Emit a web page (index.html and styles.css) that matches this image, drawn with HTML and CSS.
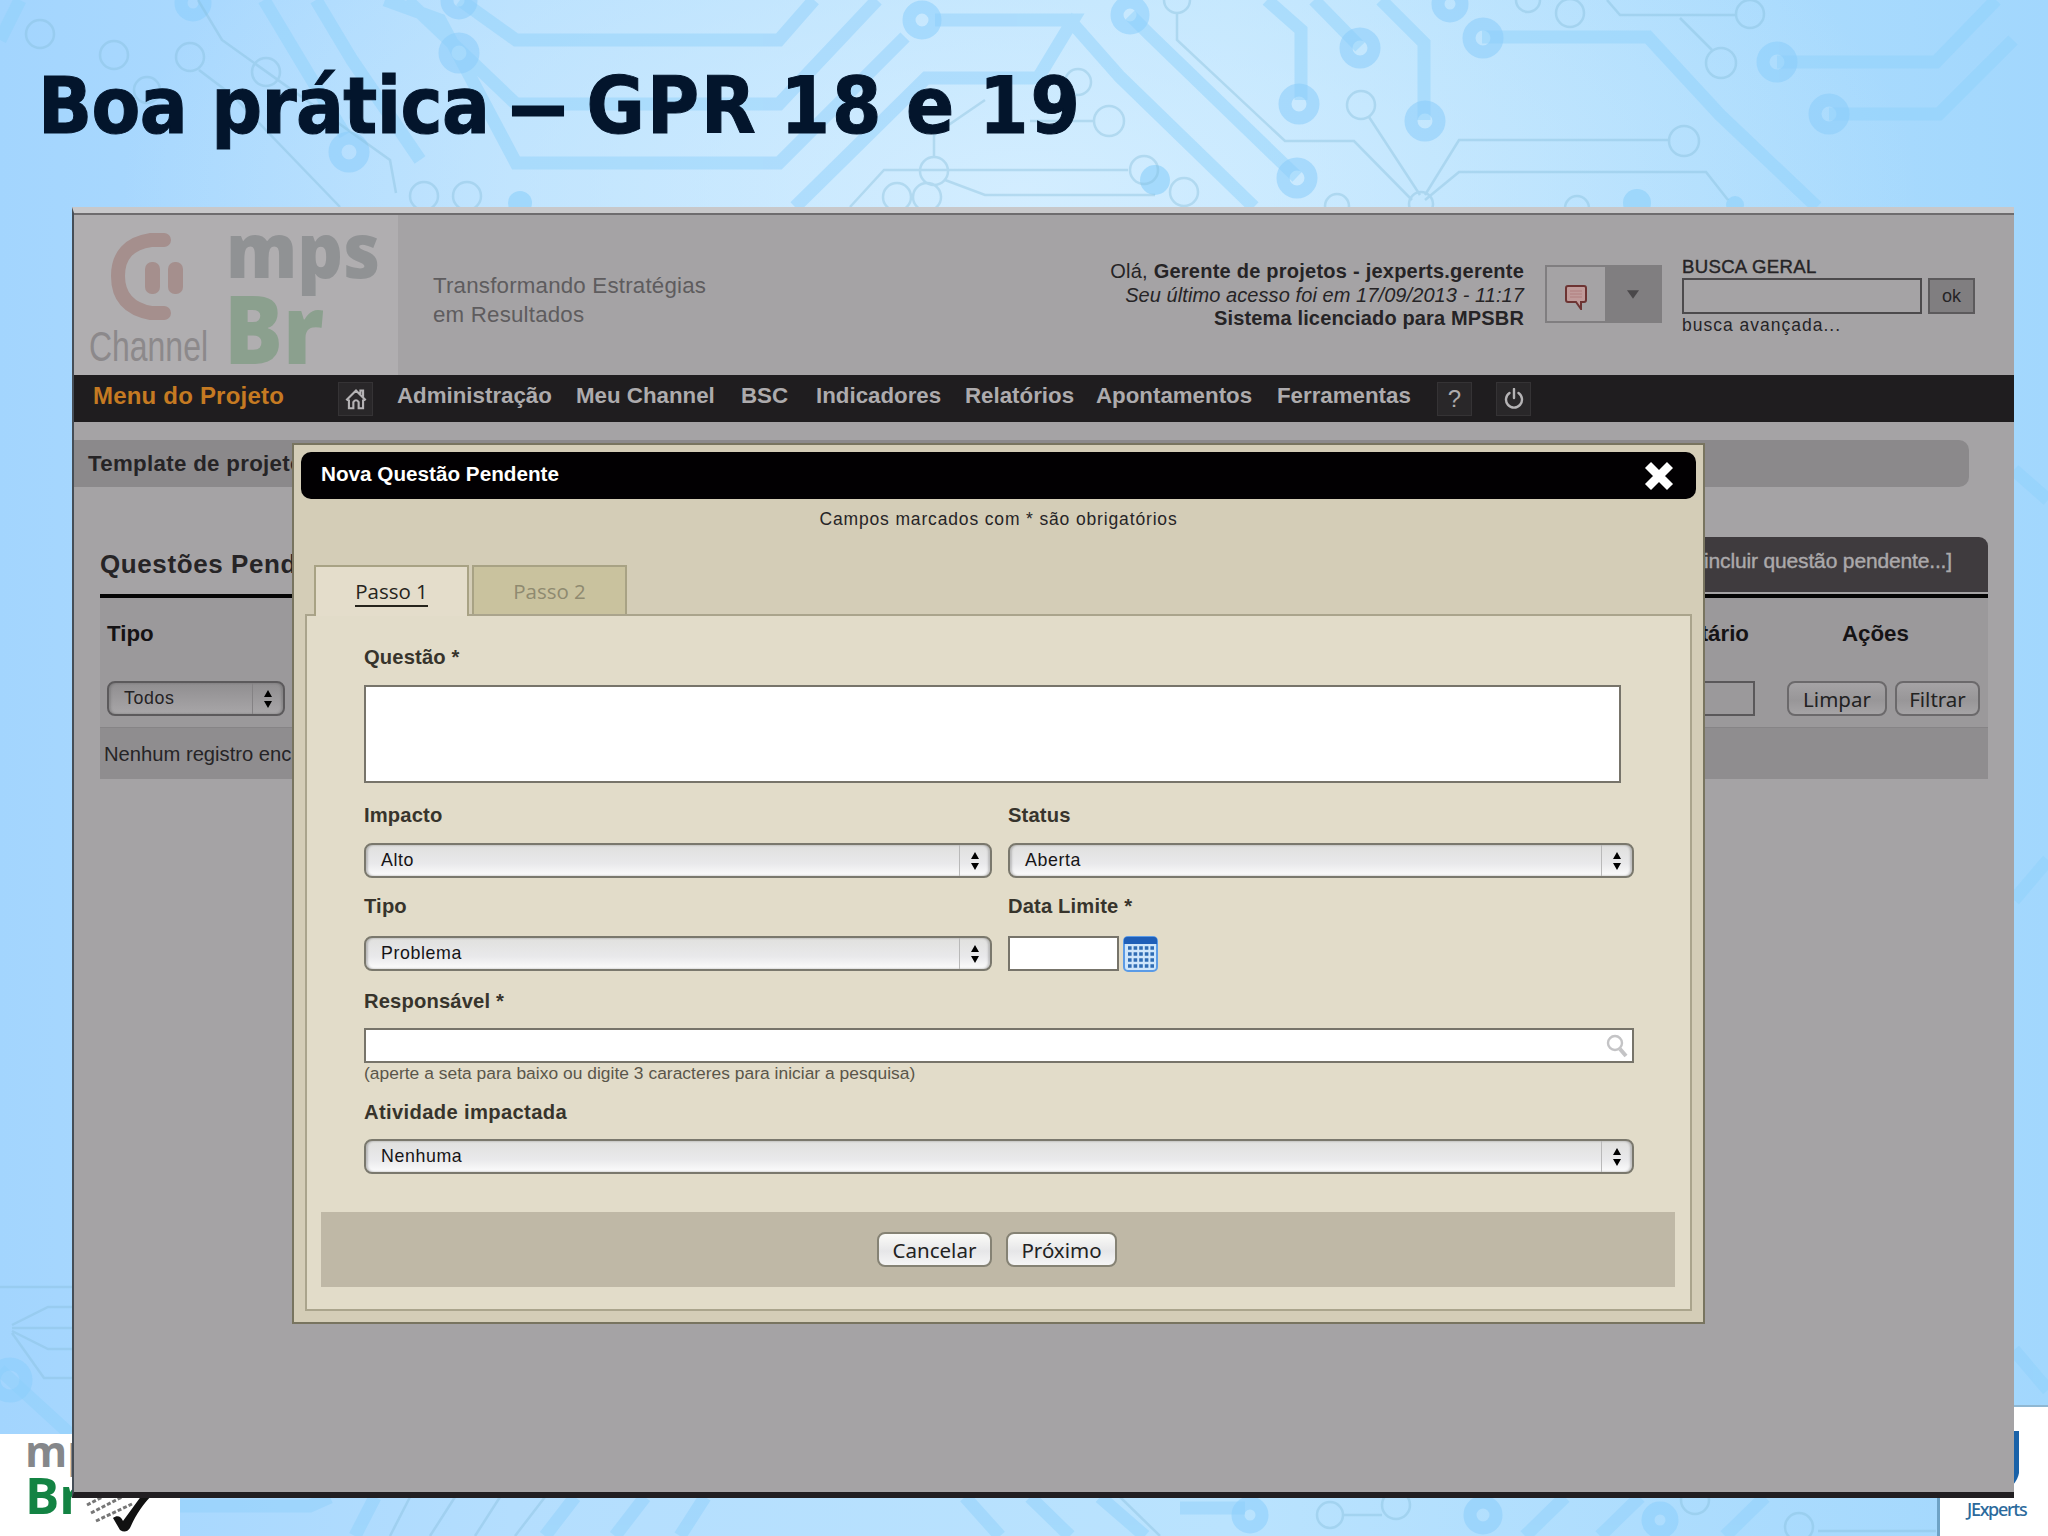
FILE: index.html
```html
<!DOCTYPE html>
<html lang="pt-BR">
<head>
    <meta charset="UTF-8">
    <meta name="viewport" content="width=device-width, initial-scale=1.0">
    <title>Boa prática – GPR 18 e 19</title>
    <link rel="stylesheet" href="styles.css">
</head>
<body>
    <div class="slide">
        <!-- circuitos do fundo -->
        <svg class="circuit" viewBox="0 0 2048 1536" fill="none">
            <g class="trace">
                <path d="M20 0L0 40M264 0L345 135M316 0L352 60L420 160M407 0L516 104H779L877 0M460 0L516 40H779L814 0M385 0L440 20L516 163H779L905 37"/>
                <path d="M795 207L926 78H1038L1073 20H935M1067 17L1120 77L1254 207M1130 15L1150 35L1297 177M1267 0L1301 30V100M1314 0L1360 47M1381 0L1424 43V120M1482 37H1648L1720 115L1817 207M1777 62H1936L1996 0M1829 114H1939L2013 40"/>
                <path d="M2014 470L2048 500M2014 1350L2048 1390M0 1370L70 1434M2014 900L2048 860"/>
                <path d="M180 1506H310L330 1497M375 1497L355 1536M575 1497L545 1536M645 1497L615 1536M705 1497L680 1536M965 1497L1000 1536M1030 1497L1070 1536M1100 1497L1145 1536M1180 1508H1245M1565 1497L1525 1536M1640 1497L1600 1536M1765 1497L1725 1536"/>
            </g>
            <g class="ring">
                <circle cx="349" cy="152" r="14"/><circle cx="459" cy="53" r="14"/><circle cx="193" cy="3" r="12"/><circle cx="459" cy="1" r="12"/>
                <circle cx="922" cy="20" r="13"/><circle cx="1130" cy="15" r="13"/><circle cx="1297" cy="178" r="14"/><circle cx="1299" cy="104" r="14"/>
                <circle cx="1360" cy="48" r="14"/><circle cx="1425" cy="121" r="14"/><circle cx="1450" cy="4" r="12"/><circle cx="1483" cy="38" r="14"/>
                <circle cx="1777" cy="62" r="14"/><circle cx="1829" cy="114" r="14"/><circle cx="10" cy="1380" r="16"/>
                <circle cx="1250" cy="1515" r="12"/><circle cx="1483" cy="1515" r="13"/><circle cx="1660" cy="1520" r="12"/>
            </g>
            <g class="blob">
                <circle cx="520" cy="203" r="12"/><circle cx="1155" cy="180" r="15"/><circle cx="1637" cy="203" r="14"/><circle cx="1735" cy="205" r="9"/>
            </g>
            <g class="wire">
                <circle cx="40" cy="34" r="14"/><circle cx="114" cy="55" r="14"/><circle cx="190" cy="57" r="14"/><circle cx="266" cy="72" r="14"/><circle cx="147" cy="90" r="13"/>
                <circle cx="424" cy="196" r="14"/><circle cx="467" cy="196" r="14"/><circle cx="934" cy="171" r="14"/><circle cx="897" cy="197" r="14"/><circle cx="927" cy="197" r="14"/>
                <circle cx="1078" cy="82" r="13"/><circle cx="1109" cy="121" r="15"/><circle cx="1144" cy="170" r="14"/><circle cx="1184" cy="192" r="14"/><circle cx="1177" cy="0" r="13"/>
                <circle cx="1361" cy="105" r="14"/><circle cx="1684" cy="141" r="15"/><circle cx="1721" cy="63" r="15"/><circle cx="1750" cy="14" r="14"/><circle cx="1570" cy="13" r="14"/><circle cx="1528" cy="0" r="12"/>
                <circle cx="1421" cy="204" r="12"/><circle cx="1337" cy="206" r="12"/><circle cx="1577" cy="208" r="12"/>
                <path d="M198 0L222 40L390 160L396 193M199 70L232 95L340 207M850 207L884 170H1128M945 180L985 195H1155M1030 121H1094M934 157V135L985 100"/>
                <path d="M1177 13V40L1285 141H1354L1412 200M1369 117L1420 195M1425 195L1459 140H1669M1425 200L1459 172H1706L1728 200M1607 0L1620 15H1736M1680 18L1712 50"/>
                <path d="M0 1287H72M12 1325L48 1307H72M12 1328H72M12 1331L48 1349H72M12 1333L44 1378H72"/>
                <path d="M410 1497L390 1536M455 1497L430 1536M500 1497L475 1536M545 1497L515 1536M1120 1497L1160 1536"/>
                <circle cx="1330" cy="1515" r="13"/><circle cx="1396" cy="1505" r="14"/><circle cx="1695" cy="1500" r="14"/><circle cx="1799" cy="1527" r="14"/>
                <path d="M1343 1515H1382M1818 1531H1936"/>
            </g>
        </svg>

        <h1>Boa prática <span class="dash">–</span> <span class="tail">GPR 18 e 19</span></h1>

        <div class="corner corner-left">
            <span class="corner-mps">mps</span>
            <span class="corner-br">Br</span>
            <svg class="corner-check" viewBox="0 0 70 50">
                <g stroke="#777" stroke-width="3" stroke-dasharray="4 2"><path d="M3 18L22 8M7 26L40 9M12 34L48 17"/></g>
                <path d="M29 31C33 28 37 29 39 34L58 8L70 6C58 18 52 28 46 41Q42 47 36 43Z" fill="#111"/>
            </svg>
        </div>
        <div class="corner corner-right">
            <svg class="corner-j" viewBox="0 0 20 56"><path d="M0 0H20V42Q19 48 14 54H0Z" fill="#1a62a8"/></svg>
            <span class="corner-name">JExperts</span>
        </div>

        <div class="app">
            <header class="header">
                <div class="logo">
                    <svg width="324" height="160" viewBox="0 0 324 160">
                        <path d="M90 25H77Q44 30 44 61Q44 92 77 98H90" fill="none" stroke="#a58f8d" stroke-width="14" stroke-linecap="round"/>
                        <rect x="71" y="47" width="15" height="32" rx="7" fill="#a58f8d"/>
                        <rect x="94" y="47" width="15" height="32" rx="7" fill="#a58f8d"/>
                        <text x="15" y="146" class="logo-channel" textLength="119" lengthAdjust="spacingAndGlyphs">Channel</text>
                        <text x="152" y="63" class="logo-mps" textLength="154" lengthAdjust="spacingAndGlyphs">mps</text>
                        <text x="150" y="149" class="logo-br" textLength="100" lengthAdjust="spacingAndGlyphs">Br</text>
                    </svg>
                </div>
                <p class="slogan">Transformando Estratégias<br>em Resultados</p>
                <div class="user">
                    <div class="user-hello">Olá, <b>Gerente de projetos - jexperts.gerente</b></div>
                    <div class="user-last">Seu último acesso foi em 17/09/2013 - 11:17</div>
                    <div class="user-license"><b>Sistema licenciado para MPSBR</b></div>
                </div>
                <div class="messages">
                    <div class="messages-icon">
                        <svg width="24" height="26" viewBox="0 0 24 26"><path d="M4 2H20Q22 2 22 4V16Q22 18 20 18H17V25L12 18H4Q2 18 2 16V4Q2 2 4 2Z" fill="#c09b9a" stroke="#6d3433" stroke-width="2"/><path d="M6 7H18M6 10H18M6 13H18" stroke="#b07f7f" stroke-width="1"/></svg>
                    </div>
                    <div class="messages-arrow"><svg width="12" height="9" viewBox="0 0 14 10"><path d="M0 0H14L7 10Z" fill="#4a484a"/></svg></div>
                </div>
                <div class="search">
                    <div class="search-title">BUSCA GERAL</div>
                    <div class="search-row">
                        <div class="search-input"></div>
                        <div class="search-ok">ok</div>
                    </div>
                    <div class="search-more">busca avançada...</div>
                </div>
            </header>

            <nav class="nav">
                <span class="nav-project">Menu do Projeto</span>
                <span class="nav-icon nav-home">
                    <svg width="24" height="23" viewBox="0 0 26 26" fill="none" stroke="#b5b3b5" stroke-width="2.4"><path d="M2 15L13 4L24 15M18 8V4H21V11M5 14V24H10V17Q13 13 16 17V24H21V14"/></svg>
                </span>
                <span class="nav-item nav-adm">Administração</span>
                <span class="nav-item nav-meu">Meu Channel</span>
                <span class="nav-item nav-bsc">BSC</span>
                <span class="nav-item nav-ind">Indicadores</span>
                <span class="nav-item nav-rel">Relatórios</span>
                <span class="nav-item nav-apo">Apontamentos</span>
                <span class="nav-item nav-fer">Ferramentas</span>
                <span class="nav-icon nav-help">?</span>
                <span class="nav-icon">
                    <svg width="20" height="22" viewBox="0 0 20 22" fill="none" stroke="#b5b3b5" stroke-width="2.4" stroke-linecap="round"><path d="M5.500 5A8 8 0 1 0 14.500 5M10 1V10"/></svg>
                </span>
            </nav>

            <div class="breadcrumb">Template de projeto</div>

            <div class="section-head">
                <h2>Questões Pendentes</h2>
                <div class="section-add">[incluir questão pendente...]</div>
            </div>
            <div class="grid">
                <div class="grid-titles">
                    <span>Tipo</span>
                    <span class="grid-owner">Destinatário</span>
                    <span class="grid-actions">Ações</span>
                </div>
                <div class="grid-filters">
                    <div class="select select-dim"><span>Todos</span><i><svg width="10" height="18" viewBox="0 0 10 18"><path d="M5 0L9 7H1ZM5 18L1 11H9Z"/></svg></i></div>
                    <div class="filter-input"></div>
                    <div class="btn btn-dim btn-limpar">Limpar</div>
                    <div class="btn btn-dim btn-filtrar">Filtrar</div>
                </div>
                <div class="grid-empty">Nenhum registro encontrado</div>
            </div>
        </div>

        <div class="modal">
            <div class="modal-title">
                <span>Nova Questão Pendente</span>
                <svg width="32" height="34" viewBox="0 0 32 34"><path d="M5 6L27 28M27 6L5 28" stroke="#fff" stroke-width="8.500"/></svg>
            </div>
            <p class="modal-note">Campos marcados com * são obrigatórios</p>
            <div class="tabs">
                <div class="tab tab-active"><span>Passo 1</span></div>
                <div class="tab"><span>Passo 2</span></div>
            </div>
            <div class="panel">
                <div class="form">
                    <label>Questão *</label>
                    <div class="field field-area"></div>
                    <div class="form-row row-first">
                        <div class="col">
                            <label>Impacto</label>
                            <div class="select"><span>Alto</span><i><svg width="10" height="18" viewBox="0 0 10 18"><path d="M5 0L9 7H1ZM5 18L1 11H9Z"/></svg></i></div>
                        </div>
                        <div class="col">
                            <label>Status</label>
                            <div class="select"><span>Aberta</span><i><svg width="10" height="18" viewBox="0 0 10 18"><path d="M5 0L9 7H1ZM5 18L1 11H9Z"/></svg></i></div>
                        </div>
                    </div>
                    <div class="form-row row-second">
                        <div class="col">
                            <label>Tipo</label>
                            <div class="select"><span>Problema</span><i><svg width="10" height="18" viewBox="0 0 10 18"><path d="M5 0L9 7H1ZM5 18L1 11H9Z"/></svg></i></div>
                        </div>
                        <div class="col">
                            <label>Data Limite *</label>
                            <div class="date">
                                <div class="field field-date"></div>
                                <svg width="35" height="36" viewBox="0 0 35 36">
                                    <rect x="1" y="1" width="33" height="34" rx="4" fill="#cfe6fb" stroke="#5b9be6" stroke-width="2"/>
                                    <path d="M1 8V4Q1 1 4 1H31Q34 1 34 4V8Z" fill="#1f5fb8"/>
                                    <path d="M5 12H31M5 18H31M5 24H31M5 30H31" stroke="#2f6cb4" stroke-width="3.600" stroke-dasharray="3.600 2"/>
                                </svg>
                            </div>
                        </div>
                    </div>
                    <label class="label-owner">Responsável *</label>
                    <div class="field field-search">
                        <svg width="22" height="24" viewBox="0 0 22 24" fill="none" stroke="#c4c4c6"><circle cx="9" cy="9" r="7" stroke-width="2.400"/><path d="M14 15L20 22" stroke-width="4"/></svg>
                    </div>
                    <div class="hint">(aperte a seta para baixo ou digite 3 caracteres para iniciar a pesquisa)</div>
                    <label class="label-task">Atividade impactada</label>
                    <div class="select"><span>Nenhuma</span><i><svg width="10" height="18" viewBox="0 0 10 18"><path d="M5 0L9 7H1ZM5 18L1 11H9Z"/></svg></i></div>
                </div>
                <div class="actions">
                    <div class="btn btn-cancelar">Cancelar</div>
                    <div class="btn btn-proximo">Próximo</div>
                </div>
            </div>
        </div>
    </div>
</body>
</html>
```
FILE: styles.css
```css
* {
    margin: 0;
    padding: 0;
    box-sizing: border-box;
}

body {
    font-family: "Liberation Sans", Arial, sans-serif;
    color: #262426;
}

.slide {
    position: relative;
    width: 2048px;
    height: 1536px;
    overflow: hidden;
    background:
        radial-gradient(ellipse 900px 420px at 1020px 190px, rgba(215, 239, 255, 0.85), rgba(200, 232, 255, 0) 100%),
        linear-gradient(90deg, #a3d5fe 0%, #b4defe 25%, #bae3fe 60%, #a2d7fd 100%);
}

/* fundo */
.circuit {
    position: absolute;
    inset: 0;
    width: 2048px;
    height: 1536px;
}

.trace {
    stroke: #8fd0fb;
    stroke-width: 13;
    opacity: 0.48;
}

.ring {
    stroke: #8bcdfb;
    stroke-width: 13;
    opacity: 0.55;
}

.blob {
    fill: #93d3fb;
    opacity: 0.7;
}

.wire {
    stroke: #86bfdc;
    stroke-width: 2.5;
    opacity: 0.4;
}

h1 {
    position: relative;
    height: 207px;
    padding: 58px 0 0 38px;
    font: bold 79px/96px "DejaVu Sans Condensed", "DejaVu Sans", sans-serif;
    font-stretch: condensed;
    letter-spacing: -0.6px;
    color: #03152c;
    white-space: nowrap;
    -webkit-text-stroke: 1px #03152c;
}

.dash {
    display: inline-block;
    margin: 0 7px;
    transform: scaleX(1.8);
}

.tail {
    letter-spacing: 2px;
    word-spacing: -4px;
}

/* logos dos cantos */
.corner {
    position: absolute;
    bottom: 0;
    background: #fff;
}

.corner-left {
    left: 0;
    width: 180px;
    height: 102px;
    padding-left: 25px;
    font-family: "Open Sans", sans-serif;
    font-weight: bold;
}

.corner-mps,
.corner-br {
    display: block;
}

.corner-mps {
    font-size: 43px;
    line-height: 34px;
    color: #85878a;
}

.corner-br {
    font-size: 51px;
    line-height: 52px;
    color: #138343;
}

.corner-check {
    position: absolute;
    left: 84px;
    top: 53px;
    width: 70px;
    height: 50px;
}

.corner-right {
    right: 0;
    width: 111px;
    height: 131px;
    border-top: 2px solid #8fb7d2;
    border-left: 3px solid #6ea3c6;
}

.corner-j {
    position: absolute;
    left: 59px;
    top: 24px;
    width: 20px;
    height: 56px;
}

.corner-name {
    position: absolute;
    left: 27px;
    top: 89px;
    font: 500 18px/26px "Noto Sans", sans-serif;
    letter-spacing: -1.3px;
    color: #2c6a9c;
}

/* sistema */
.app {
    position: relative;
    width: 1942px;
    height: 1291px;
    margin-left: 72px;
    background: #a5a3a5;
    border-top: 6px solid #c8c8ca;
    border-left: 2px solid #454d56;
    border-bottom: 6px solid #221f22;
}

.header {
    display: flex;
    height: 162px;
    padding-right: 39px;
    border-top: 2px solid #6e6c6e;
}

.logo {
    width: 324px;
    height: 160px;
    background: #b0aeb0;
}

.logo svg {
    display: block;
    overflow: visible;
}

.logo-channel {
    font-size: 43px;
    fill: #8c898b;
}

.logo-mps,
.logo-br {
    font-family: "Open Sans", sans-serif;
    font-weight: 800;
}

.logo-mps {
    font-size: 77px;
    fill: #909294;
}

.logo-br {
    font-size: 95px;
    fill: #8ba08e;
}

.slogan {
    margin: 56px 0 0 35px;
    font-size: 22.3px;
    line-height: 29px;
    letter-spacing: 0.2px;
    color: #5e5c5e;
    white-space: nowrap;
}

.user {
    margin: 45px 21px 0 auto;
    font-size: 20px;
    line-height: 23.5px;
    text-align: right;
    white-space: nowrap;
}

.user-hello {
    letter-spacing: 0.24px;
}

.user-last {
    font-style: italic;
    letter-spacing: 0.08px;
}

.user-license {
    letter-spacing: 0.15px;
}

.messages {
    display: flex;
    width: 117px;
    height: 58px;
    margin: 50px 20px 0 0;
    border: 2px solid #807e80;
}

.messages-icon {
    display: flex;
    align-items: center;
    justify-content: center;
    width: 58px;
    padding-top: 6px;
}

.messages-arrow {
    flex: 1;
    display: flex;
    align-items: center;
    justify-content: center;
    background: #807e80;
}

.search {
    width: 293px;
    padding-top: 41px;
}

.search-title {
    font-size: 18.6px;
    line-height: 22px;
    letter-spacing: 0.3px;
    -webkit-text-stroke: 0.4px;
}

.search-row {
    display: flex;
    gap: 6px;
}

.search-input {
    width: 240px;
    height: 36px;
    border: 2px solid #4c4a4c;
}

.search-ok {
    width: 47px;
    height: 36px;
    border: 2px solid #5c5a5c;
    background: #807e80;
    font-size: 18px;
    line-height: 32px;
    text-align: center;
}

.search-more {
    font-size: 17.5px;
    line-height: 23px;
    letter-spacing: 1px;
}

.nav {
    display: flex;
    align-items: center;
    height: 47px;
    padding-left: 19px;
    background: #1f1d1f;
    color: #adabad;
    white-space: nowrap;
}

.nav-project {
    width: 245px;
    font-size: 24px;
    font-weight: bold;
    letter-spacing: 0.2px;
    color: #c57a22;
    line-height: 40px;
    margin-top: -5px;
}

.nav-icon {
    display: flex;
    align-items: center;
    justify-content: center;
    width: 35px;
    height: 34px;
    margin-right: 24px;
    background: #292729;
    border: 1px solid #353335;
    font-size: 24px;
}

.nav-item {
    font-size: 22.3px;
    font-weight: bold;
    line-height: 40px;
    margin-top: -5px;
}

.nav-adm { width: 179px; }
.nav-meu { width: 165px; }
.nav-bsc { width: 75px; }
.nav-ind { width: 149px; }
.nav-rel { width: 131px; }
.nav-apo { width: 181px; }
.nav-fer { width: 160px; }

.breadcrumb {
    width: 1895px;
    height: 47px;
    margin-top: 18px;
    padding-left: 14px;
    border-radius: 0 10px 10px 0;
    background: #8b898b;
    font-size: 22.3px;
    font-weight: bold;
    letter-spacing: 0.3px;
    line-height: 48px;
}

.section-head {
    display: flex;
    justify-content: space-between;
    align-items: flex-start;
    width: 1888px;
    height: 61px;
    margin: 50px 0 0 26px;
    border-bottom: 4px solid #050505;
}

h2 {
    font-size: 26px;
    line-height: 55px;
    letter-spacing: 0.6px;
}

.section-add {
    width: 500px;
    height: 55px;
    padding-right: 36px;
    border-radius: 0 9px 0 0;
    background: #3f3b3e;
    color: #aba9ab;
    font-size: 21px;
    letter-spacing: -0.15px;
    line-height: 48px;
    text-align: right;
    -webkit-text-stroke: 0.4px;
}

.grid {
    width: 1888px;
    margin-left: 26px;
    background: #9b999b;
}

.grid-titles {
    display: flex;
    height: 83px;
    padding-left: 7px;
    font-size: 22.3px;
    font-weight: bold;
    line-height: 72px;
    color: #151315;
}

.grid-owner {
    flex: 1;
    text-align: right;
    padding-right: 93px;
}

.grid-actions {
    width: 146px;
}

.grid-filters {
    display: flex;
    height: 47px;
    padding: 0 8px 0 7px;
    border-bottom: 1px solid #868486;
}

.grid-empty {
    height: 51px;
    padding-left: 4px;
    background: #8f8d8f;
    font-size: 20.2px;
    line-height: 53px;
}

.filter-input {
    width: 300px;
    height: 35px;
    margin: 0 32px 0 auto;
    border: 2px solid #5a585a;
}

/* controles */
.select {
    display: flex;
    justify-content: space-between;
    height: 35px;
    padding-left: 15px;
    border: 2px solid #7a786d;
    border-radius: 8px;
    background: linear-gradient(#e0e0de 0%, #e9e9eb 60%, #fcfcfc 100%);
    box-shadow: inset 2px 0 2px rgba(90, 90, 90, 0.3), inset -2px 0 2px rgba(90, 90, 90, 0.3);
    color: #161416;
    font-size: 17.8px;
    letter-spacing: 0.6px;
    line-height: 31px;
}

.select i {
    display: flex;
    align-items: center;
    justify-content: center;
    width: 31px;
    border-left: 1px solid #b9b9b9;
}

.select-dim {
    width: 178px;
    border-color: #5c5a5c;
    background: linear-gradient(#908e90, #a8a6a8);
    color: #242224;
}

.select-dim i {
    border-color: #848284;
}

.btn {
    height: 35px;
    border: 2px solid #858274;
    border-radius: 8px;
    background: linear-gradient(#fbfbf8 0%, #e6e6e8 55%, #f5f5f5 100%);
    color: #222;
    font: 20.5px/32px "Noto Sans", sans-serif;
    text-align: center;
}

.btn-dim {
    border-color: #6b696b;
    background: linear-gradient(#a5a3a5, #989698 55%, #a5a3a5);
    line-height: 33px;
}

.btn-limpar {
    width: 100px;
    margin-right: 8px;
}

.btn-filtrar {
    width: 85px;
}

/* janela */
.modal {
    position: absolute;
    left: 292px;
    top: 443px;
    width: 1413px;
    height: 881px;
    padding: 7px;
    border: 2px solid #78745f;
    background: #d4cdb7;
}

.modal-title {
    display: flex;
    justify-content: space-between;
    height: 47px;
    padding: 7px 21px 0 20px;
    border-radius: 10px;
    background: #020002;
    color: #fff;
    font-size: 20.7px;
    font-weight: bold;
    line-height: 30px;
}

.modal-note {
    height: 66px;
    padding-top: 5px;
    font-size: 17.5px;
    line-height: 31px;
    letter-spacing: 0.85px;
    text-align: center;
}

.tabs {
    position: relative;
    display: flex;
    gap: 3px;
    height: 51px;
    margin: 0 0 -2px 13px;
}

.tab {
    width: 155px;
    height: 49px;
    border: 2px solid #a8a284;
    border-bottom: 0;
    background: #c9c29e;
    color: #8f8a70;
    font: 20.5px/48px "Open Sans", sans-serif;
    text-align: center;
}

.tab-active {
    height: 51px;
    background: #e4ddcb;
    color: #26241c;
}

.tab-active span {
    border-bottom: 2px solid #26241c;
}

.panel {
    height: 697px;
    margin: 0 4px;
    padding: 26px 15px 0 14px;
    border: 2px solid #aaa48c;
    background: #e2dcc9;
}

.form {
    width: 1270px;
    margin-left: 43px;
}

label {
    display: block;
    font-size: 20.2px;
    font-weight: bold;
    line-height: 30px;
    letter-spacing: 0.15px;
    color: #37342c;
}

.field {
    border: 2px solid #77746a;
    background: #fff;
}

.field-area {
    width: 1257px;
    height: 98px;
    margin-top: 13px;
}

.form-row {
    display: flex;
    gap: 16px;
}

.col {
    width: 628px;
}

.col:last-child {
    width: 626px;
}

.row-first {
    margin-top: 17px;
}

.row-first .select {
    margin-top: 13px;
}

.row-second {
    margin-top: 13px;
}

.row-second .select,
.date {
    margin-top: 15px;
}

.date {
    display: flex;
    gap: 4px;
}

.field-date {
    width: 111px;
    height: 35px;
}

/* a linha de cima tem 36px por causa do calendário */
.label-owner {
    margin-top: 14px;
}

.field-search {
    display: flex;
    justify-content: flex-end;
    height: 35px;
    margin-top: 12px;
    padding: 4px 4px 0 0;
}

.hint {
    font-size: 17.4px;
    line-height: 20px;
    letter-spacing: 0.03px;
    color: #5a564a;
}

.label-task {
    margin: 14px 0 12px;
    letter-spacing: 0.35px;
}

.actions {
    display: flex;
    justify-content: center;
    gap: 14px;
    height: 75px;
    margin: 38px 0 0;
    padding: 20px 2px 0 0;
    background: #bfb8a6;
}

.btn-cancelar {
    width: 115px;
}

.btn-proximo {
    width: 111px;
}
```
